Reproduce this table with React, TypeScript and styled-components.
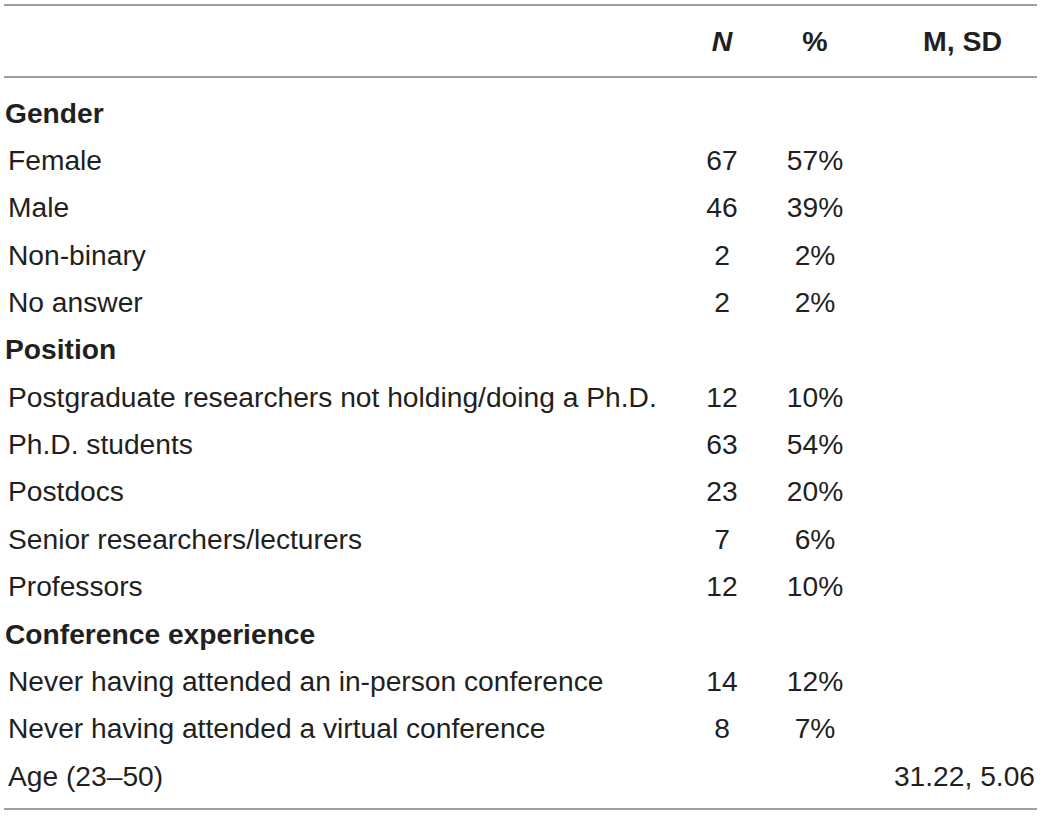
import React from "react";
import styled, { createGlobalStyle } from "styled-components";

const Global = createGlobalStyle`
  html, body { margin: 0; padding: 0; background: #fff; }
  body { font-family: "Liberation Sans", Arial, Helvetica, sans-serif; color: #231f20; }
`;

const Table = styled.div`
  margin: 4px 0 0 4px;
  width: 1033px;
  border-top: 2px solid #a0a0a0;
  border-bottom: 2px solid #a0a0a0;
`;

const Grid = styled.div`
  display: grid;
  grid-template-columns: 674px 88px 98px 173px;
`;

const Header = styled(Grid)`
  height: 70px;
  align-items: center;
  border-bottom: 2px solid #a0a0a0;
  font-weight: bold;
  font-size: 28.5px;
`;

const Body = styled.div`
  padding: 11px 0 9px;
`;

const Row = styled(Grid)`
  height: 47.36px;
  align-items: center;
  font-size: 28.2px;
  line-height: 1;
`;

const Label = styled.div<{ $bold?: boolean }>`
  padding-left: ${(p) => (p.$bold ? "1px" : "4px")};
  font-weight: ${(p) => (p.$bold ? "bold" : "normal")};
  white-space: nowrap;
`;

const Cell = styled.div<{ $italic?: boolean }>`
  text-align: center;
  font-style: ${(p) => (p.$italic ? "italic" : "normal")};
  white-space: nowrap;
`;

const StatCell = styled(Cell)`
  text-align: right;
  padding-right: 2px;
`;

const StatHead = styled(Cell)`
  padding-left: 24px;
`;

type R = { label: string; bold?: boolean; n?: string; pct?: string; msd?: string };

const rows: R[] = [
  { label: "Gender", bold: true },
  { label: "Female", n: "67", pct: "57%" },
  { label: "Male", n: "46", pct: "39%" },
  { label: "Non-binary", n: "2", pct: "2%" },
  { label: "No answer", n: "2", pct: "2%" },
  { label: "Position", bold: true },
  { label: "Postgraduate researchers not holding/doing a Ph.D.", n: "12", pct: "10%" },
  { label: "Ph.D. students", n: "63", pct: "54%" },
  { label: "Postdocs", n: "23", pct: "20%" },
  { label: "Senior researchers/lecturers", n: "7", pct: "6%" },
  { label: "Professors", n: "12", pct: "10%" },
  { label: "Conference experience", bold: true },
  { label: "Never having attended an in-person conference", n: "14", pct: "12%" },
  { label: "Never having attended a virtual conference", n: "8", pct: "7%" },
  { label: "Age (23–50)", msd: "31.22, 5.06" },
];

export default function App() {
  return (
    <>
      <Global />
      <Table>
        <Header>
          <div />
          <Cell $italic>N</Cell>
          <Cell>%</Cell>
          <StatHead>M, SD</StatHead>
        </Header>
        <Body>
          {rows.map((r) => (
            <Row key={r.label}>
              <Label $bold={r.bold}>{r.label}</Label>
              <Cell>{r.n ?? ""}</Cell>
              <Cell>{r.pct ?? ""}</Cell>
              <StatCell>{r.msd ?? ""}</StatCell>
            </Row>
          ))}
        </Body>
      </Table>
    </>
  );
}
